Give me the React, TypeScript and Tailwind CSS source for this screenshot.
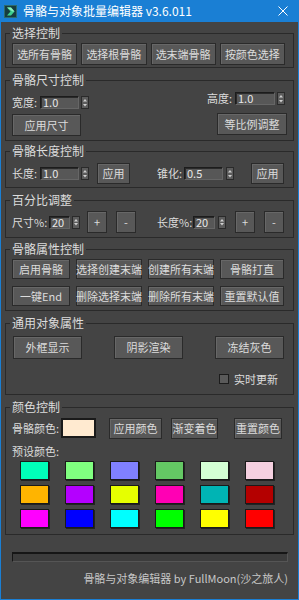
import React from 'react';

const font = "font-['Noto_Sans_CJK_SC','Noto_Sans',sans-serif]";

const Btn: React.FC<{ children: React.ReactNode; className?: string }> = ({ children, className = '' }) => (
  <button
    className={`flex items-center justify-center bg-[#585858] border border-[#2a2a2a] shadow-[inset_1px_1px_0_#676767] text-[#dcdcdc] text-[11px] leading-none whitespace-nowrap ${className}`}
  >
    {children}
  </button>
);

const Field: React.FC<{ value: string; className?: string }> = ({ value, className = '' }) => (
  <div
    className={`h-[13px] flex items-center bg-[#575757] border border-[#1c1c1c] border-b-[#666] border-r-[#666] shadow-[inset_1px_1px_0_#2a2a2a] text-[11px] leading-none text-[#e8e8e8] pl-[2px] ${className}`}
  >
    {value}
  </div>
);

const Spinner: React.FC<{ className?: string }> = ({ className = '' }) => (
  <div className={`flex flex-col w-[8px] h-[13px] bg-[#5c5c5c] border border-[#2a2a2a] ${className}`}>
    <svg viewBox="0 0 6 5.5" className="w-[6px] h-[5.5px]">
      <polygon points="1,4.5 5,4.5 3,2" fill="#d0d0d0" />
    </svg>
    <svg viewBox="0 0 6 5.5" className="w-[6px] h-[5.5px]">
      <polygon points="1,1 5,1 3,3.5" fill="#d0d0d0" />
    </svg>
  </div>
);

const Group: React.FC<{ title: string; className?: string; children: React.ReactNode }> = ({ title, className = '', children }) => (
  <fieldset className={`border border-[#2a2a2a] ${className}`}>
    <legend className="ml-[4px] px-[2px] text-[12px] leading-[14px] text-[#dcdcdc]">{title}</legend>
    {children}
  </fieldset>
);

const presets = [
  '#00ffb9', '#80ff80', '#8080ff', '#64c864', '#d4ffd4', '#f5d0e0',
  '#ffb400', '#b400ff', '#e6ff00', '#ff00b4', '#00b4b4', '#b40000',
  '#ff00ff', '#0000ff', '#00ffff', '#00ff00', '#ffff00', '#ff0000',
];

export default function App() {
  return (
    <div className={`w-[299px] h-[600px] bg-[#444444] border border-t-0 border-[#1a7fd4] flex flex-col text-[#dcdcdc] ${font}`}>
      {/* 标题栏 */}
      <div className="h-[22px] bg-[#1a7fd4] flex items-center shrink-0">
        <svg viewBox="0 0 13 13" className="ml-[3px] w-[13px] h-[13px]">
          <rect x="0" y="0" width="13" height="13" fill="#163c3e" />
          <rect x="0.5" y="0.5" width="12" height="12" fill="none" stroke="#2d6b6b" />
          <polygon points="3,2.5 7,2.5 10.5,6.5 7,10.5 3,10.5 6.5,6.5" fill="#3ccf8e" />
          <polygon points="3,2.5 7,2.5 10.5,6.5 8.5,6.5" fill="#8ef0c0" />
        </svg>
        <span className="ml-[6px] text-[12px] leading-none text-white">骨骼与对象批量编辑器 v3.6.011</span>
        <svg viewBox="0 0 10 10" className="ml-auto mr-[10px] w-[10px] h-[10px]">
          <path d="M0.5 0.5 L9.5 9.5 M9.5 0.5 L0.5 9.5" stroke="#ffffff" strokeWidth="1" />
        </svg>
      </div>

      <div className="flex flex-col px-[4px] flex-1">
        {/* 选择控制 */}
        <Group title="选择控制" className="mt-[4px]">
          <div className="grid grid-cols-4 gap-x-[4px] pl-[6px] pr-[8px] pt-[3px] pb-[2px]">
            <Btn className="h-[22px]">选所有骨骼</Btn>
            <Btn className="h-[22px]">选择根骨骼</Btn>
            <Btn className="h-[22px]">选末端骨骼</Btn>
            <Btn className="h-[22px]">按颜色选择</Btn>
          </div>
        </Group>

        {/* 骨骼尺寸控制 */}
        <Group title="骨骼尺寸控制" className="mt-[5px]">
          <div className="flex justify-between pl-[6px] pr-[6px] pb-[4px]">
            <div className="flex flex-col pt-[9px]">
              <div className="flex items-center h-[13px]">
                <span className="w-[28px] text-[11px] leading-none">宽度:</span>
                <Field value="1.0" className="w-[39px]" />
                <Spinner className="ml-[2px]" />
              </div>
              <Btn className="mt-[5px] w-[69px] h-[22px]">应用尺寸</Btn>
            </div>
            <div className="flex flex-col items-end pt-[5px]">
              <div className="flex items-center h-[13px] pr-[2px]">
                <span className="w-[28px] text-[11px] leading-none">高度:</span>
                <Field value="1.0" className="w-[40px]" />
                <Spinner className="ml-[2px]" />
              </div>
              <Btn className="mt-[8px] w-[70px] h-[22px]">等比例调整</Btn>
            </div>
          </div>
        </Group>

        {/* 骨骼长度控制 */}
        <Group title="骨骼长度控制" className="mt-[3px]">
          <div className="flex items-center h-[21px] mt-[5px] mb-[3px] pl-[6px]">
            <span className="w-[28px] text-[11px] leading-none">长度:</span>
            <Field value="1.0" className="w-[39px]" />
            <Spinner className="ml-[2px]" />
            <Btn className="ml-[8px] w-[33px] h-[21px]">应用</Btn>
            <span className="ml-[27px] w-[27px] text-[11px] leading-none">锥化:</span>
            <Field value="0.5" className="w-[39px]" />
            <Spinner className="ml-[3px]" />
            <Btn className="ml-[17px] w-[33px] h-[21px]">应用</Btn>
          </div>
        </Group>

        {/* 百分比调整 */}
        <Group title="百分比调整" className="mt-[5px]">
          <div className="flex items-center h-[22px] mt-[4px] mb-[4px] pl-[6px]">
            <span className="w-[37px] text-[11px] leading-none">尺寸%:</span>
            <Field value="20" className="w-[21px]" />
            <Spinner className="ml-[2px]" />
            <Btn className="ml-[7px] w-[20px] h-[22px]">+</Btn>
            <Btn className="ml-[9px] w-[20px] h-[22px]">-</Btn>
            <span className="ml-[21px] w-[36px] text-[11px] leading-none">长度%:</span>
            <Field value="20" className="w-[22px]" />
            <Spinner className="ml-[3px]" />
            <Btn className="ml-[9px] w-[20px] h-[22px]">+</Btn>
            <Btn className="ml-[9px] w-[20px] h-[22px]">-</Btn>
          </div>
        </Group>

        {/* 骨骼属性控制 */}
        <Group title="骨骼属性控制" className="mt-[4px]">
          <div className="grid grid-cols-[58px_66px_66px_64px] gap-x-[6px] gap-y-[7px] pl-[6px] pt-[3px] pb-[4px]">
            <Btn className="h-[20px]">启用骨骼</Btn>
            <Btn className="h-[20px]">选择创建末端</Btn>
            <Btn className="h-[20px]">创建所有末端</Btn>
            <Btn className="h-[20px]">骨骼打直</Btn>
            <Btn className="h-[20px]">一键End</Btn>
            <Btn className="h-[20px]">删除选择末端</Btn>
            <Btn className="h-[20px]">删除所有末端</Btn>
            <Btn className="h-[20px]">重置默认值</Btn>
          </div>
        </Group>

        {/* 通用对象属性 */}
        <Group title="通用对象属性" className="mt-[5px]">
          <div className="flex justify-between pl-[7px] pr-[9px] pt-[6px]">
            <Btn className="w-[69px] h-[23px]">外框显示</Btn>
            <Btn className="w-[69px] h-[23px]">阴影渲染</Btn>
            <Btn className="w-[69px] h-[23px]">冻结灰色</Btn>
          </div>
          <div className="flex items-center justify-end h-[12px] mt-[14px] mb-[9px] pr-[15px]">
            <div className="w-[10px] h-[10px] bg-[#5a5a5a] border border-[#1c1c1c]" />
            <span className="ml-[5px] text-[11px] leading-none">实时更新</span>
          </div>
        </Group>

        {/* 颜色控制 */}
        <Group title="颜色控制" className="mt-[5px]">
          <div className="flex items-center h-[22px] mt-[3px] pl-[6px]">
            <span className="w-[49px] text-[11px] leading-none">骨骼颜色:</span>
            <div className="w-[35px] h-[20px] bg-[#ffead0] border-2 border-[#1a1a1a]" />
            <Btn className="ml-[13px] w-[53px] h-[21px]">应用颜色</Btn>
            <Btn className="ml-[9px] w-[47px] h-[21px]">渐变着色</Btn>
            <Btn className="ml-[16px] w-[48px] h-[21px]">重置颜色</Btn>
          </div>
          <div className="mt-[5px] pl-[6px] text-[11px] leading-[14px]">预设颜色:</div>
          <div className="grid grid-cols-[repeat(6,29px)] gap-x-[16px] gap-y-[5px] pl-[14px] mt-[3px] pb-[6px]">
            {presets.map((c, i) => (
              <div
                key={i}
                className="h-[19px] border border-[#1a1a1a] shadow-[1px_1px_0_#222]"
                style={{ backgroundColor: c }}
              />
            ))}
          </div>
        </Group>

        {/* 进度条 */}
        <div className="mt-[17px] ml-[7px] mr-[6px] h-[10px] bg-[#3c3c3c] border-t-2 border-l border-[#161616] border-b border-r border-b-[#555] border-r-[#555]" />

        {/* 底部信息 */}
        <div className="mt-[9px] pr-[6px] text-right text-[11px] leading-[14px] text-[#c8c8c8]">
          骨骼与对象编辑器 by FullMoon(沙之旅人)
        </div>
      </div>
    </div>
  );
}
